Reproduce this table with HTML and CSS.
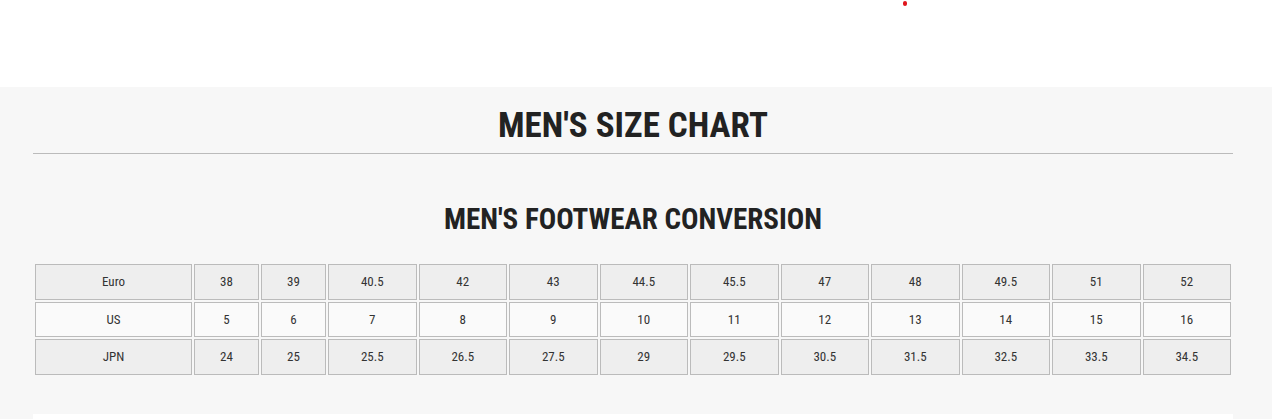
FILE: index.html
```html
<!DOCTYPE html>
<html lang="en">
<head>
<meta charset="utf-8">
<title>Men's Size Chart</title>
<link rel="stylesheet" href="styles.css">
</head>
<body>
<header class="topbar">
  <span class="notify-dot"></span>
</header>
<main class="chart-section">
  <div class="container">
    <h1 class="chart-title">MEN'S SIZE CHART</h1>
    <h2 class="chart-subtitle">MEN'S FOOTWEAR CONVERSION</h2>
    <table class="size-table">
      <colgroup>
        <col class="col-label">
        <col class="col-narrow">
        <col class="col-narrow">
        <col><col><col><col><col><col><col><col><col><col>
      </colgroup>
      <tbody>
        <tr class="row-shade">
          <td>Euro</td><td>38</td><td>39</td><td>40.5</td><td>42</td><td>43</td><td>44.5</td><td>45.5</td><td>47</td><td>48</td><td>49.5</td><td>51</td><td>52</td>
        </tr>
        <tr class="row-light">
          <td>US</td><td>5</td><td>6</td><td>7</td><td>8</td><td>9</td><td>10</td><td>11</td><td>12</td><td>13</td><td>14</td><td>15</td><td>16</td>
        </tr>
        <tr class="row-shade">
          <td>JPN</td><td>24</td><td>25</td><td>25.5</td><td>26.5</td><td>27.5</td><td>29</td><td>29.5</td><td>30.5</td><td>31.5</td><td>32.5</td><td>33.5</td><td>34.5</td>
        </tr>
      </tbody>
    </table>
    <div class="next-panel"></div>
  </div>
</main>
</body>
</html>
```
FILE: styles.css
```css
* { box-sizing: border-box; }
html, body {
  margin: 0;
  padding: 0;
}
body {
  font-family: "Roboto Condensed", "Liberation Sans Narrow", "DejaVu Sans Condensed", Roboto, sans-serif;
  color: #222;
  background: #f7f7f7;
  overflow: hidden;
}
.topbar {
  position: relative;
  height: 87px;
  background: #fff;
}
.notify-dot {
  position: absolute;
  left: 903px;
  top: 1px;
  width: 4px;
  height: 5px;
  border-radius: 2px;
  background: #e0161d;
}
.chart-section {
  background: #f7f7f7;
  padding: 18px 0 0 33px;
}
.container {
  width: 1200px;
}
.chart-title {
  margin: 0;
  font-size: 35px;
  line-height: 42px;
  font-weight: 700;
  text-align: center;
  padding-bottom: 6px;
  border-bottom: 1px solid #bbb;
  color: #222;
}
.chart-subtitle {
  margin: 48px 0 26px;
  font-size: 29px;
  line-height: 34px;
  font-weight: 700;
  text-align: center;
  color: #222;
}
.size-table {
  width: 100%;
  table-layout: fixed;
  border-collapse: separate;
  border-spacing: 2px;
  font-size: 13px;
  color: #333;
}
.col-label { width: 157px; }
.col-narrow { width: 65px; }
.size-table td {
  height: 35.5px;
  padding: 0;
  border: 1px solid #bbb;
  text-align: center;
  vertical-align: middle;
}
.row-shade td { background: #eee; }
.row-light td { background: #fafafa; }
.next-panel {
  margin-top: 37.5px;
  height: 20px;
  background: #fff;
}
```
